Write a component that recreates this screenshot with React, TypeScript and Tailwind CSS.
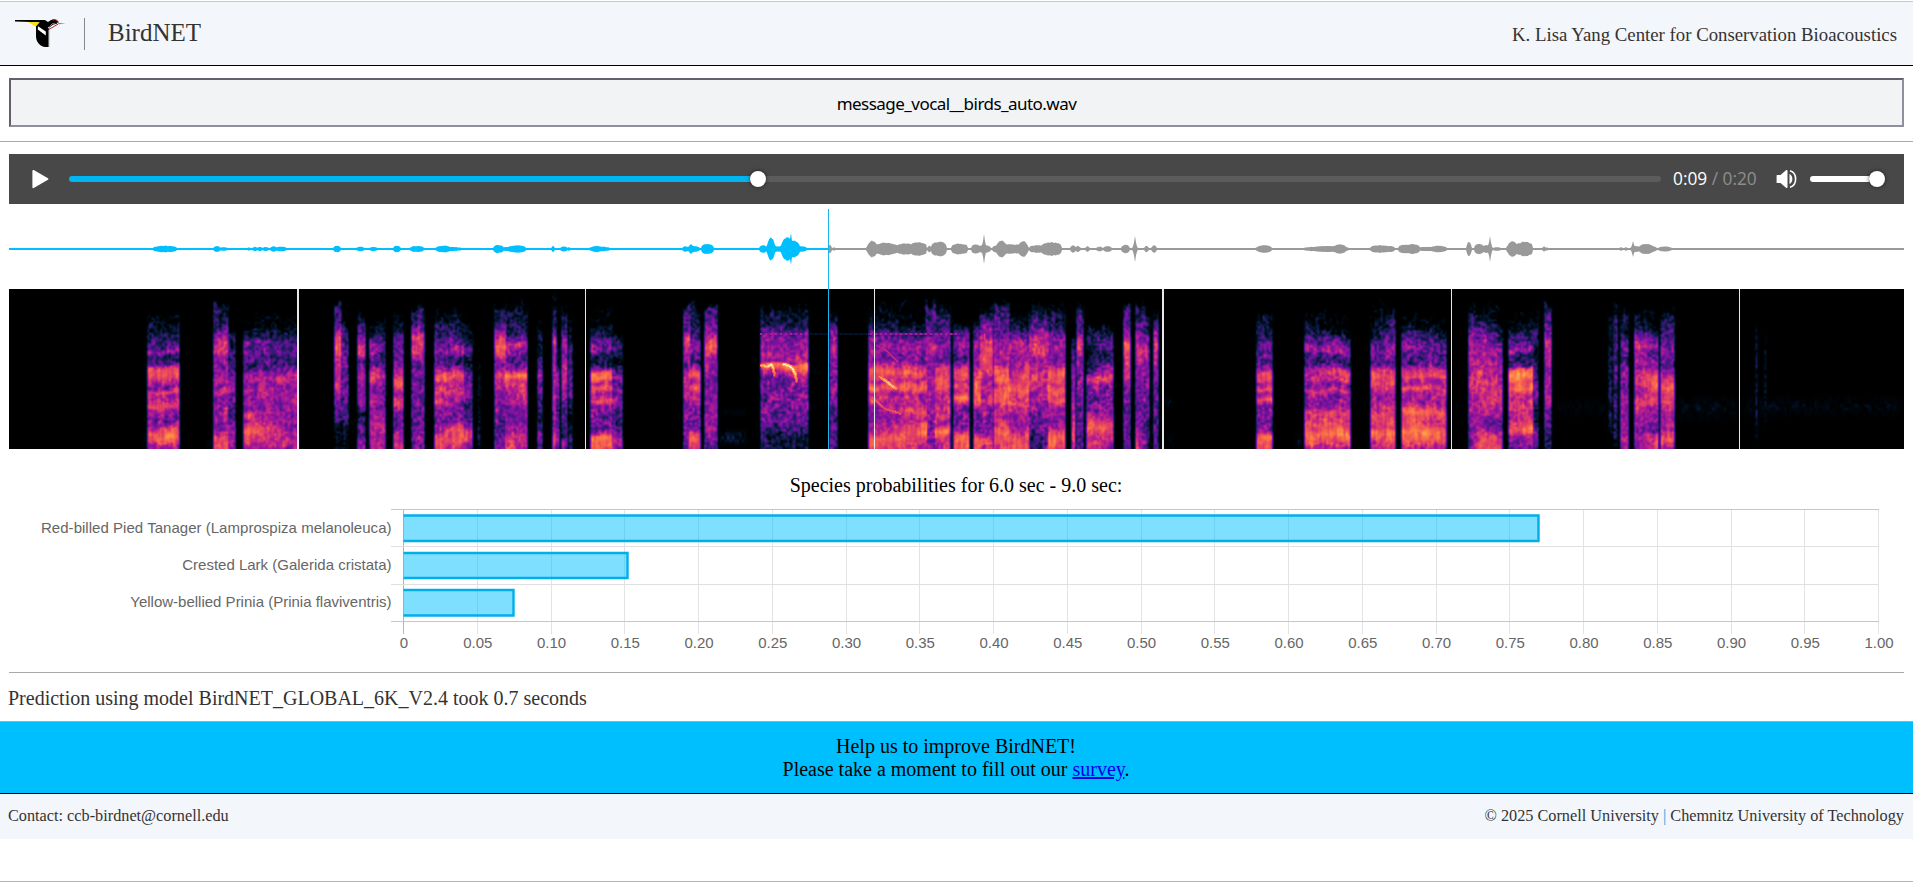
import { useLayoutEffect, useRef } from "react";

const WIDTH = 1895;
const SPEC_HEIGHT = 160;
const OFFSET = 9;

type Pair = [number, number];
type Segment = { x0: number; x1: number; left: Pair[]; right?: Pair[] };

const seg = (x0: number, x1: number, left: Pair[], right?: Pair[]): Segment => ({ x0, x1, left, right });

/* Energy profiles per syllable: [distance from the top, level] */
const segments: Segment[] = [
  seg(148, 178, [[24, 0], [26, 0.14], [29, 0.04], [39, 0.2], [50, 0.28], [58, 0.4], [62, 0.54], [66, 0.28], [73, 0.35], [77, 0.62], [81, 0.72], [88, 0.7], [94, 0.58], [98, 0.48], [102, 0.73], [106, 0.6], [117, 0.72], [121, 0.52], [132, 0.45], [139, 0.66], [144, 0.74], [150, 0.74], [155, 0.6], [160, 0.52]]),
  seg(214, 227, [[14, 0], [16, 0.2], [36, 0.3], [44, 0.48], [54, 0.66], [62, 0.62], [70, 0.48], [82, 0.5], [91, 0.62], [96, 0.46], [103, 0.68], [108, 0.48], [125, 0.5], [140, 0.5], [148, 0.7], [155, 0.72], [160, 0.68]]),
  seg(227, 234, [[42, 0], [46, 0.25], [80, 0.3], [90, 0.5], [102, 0.5], [125, 0.35], [140, 0.5], [150, 0.55], [160, 0.45]]),
  seg(244, 297, [[38, 0], [41, 0.2], [48, 0.2], [52, 0.48], [56, 0.42], [63, 0.55], [68, 0.34], [78, 0.3], [83, 0.54], [88, 0.58], [95, 0.5], [100, 0.64], [106, 0.52], [118, 0.5], [124, 0.68], [131, 0.6], [136, 0.74], [142, 0.83], [148, 0.72], [154, 0.62], [160, 0.55]], [[26, 0], [35, 0.08], [48, 0.26], [58, 0.4], [72, 0.3], [80, 0.5], [88, 0.58], [97, 0.5], [108, 0.6], [115, 0.6], [122, 0.48], [140, 0.48], [148, 0.58], [155, 0.68], [160, 0.45]]),
  seg(335, 340, [[14, 0], [18, 0.3], [35, 0.35], [48, 0.65], [60, 0.76], [74, 0.62], [83, 0.7], [100, 0.6], [115, 0.48], [140, 0.2], [160, 0.1]]),
  seg(340, 347, [[34, 0], [40, 0.28], [62, 0.45], [80, 0.42], [100, 0.4], [125, 0.4], [140, 0.1], [160, 0.05]]),
  seg(358, 364, [[24, 0], [32, 0.2], [46, 0.48], [56, 0.66], [64, 0.7], [73, 0.4], [86, 0.55], [100, 0.5], [115, 0.55], [125, 0.2], [145, 0.35], [160, 0.5]]),
  seg(370, 384, [[32, 0], [46, 0.35], [50, 0.56], [62, 0.5], [74, 0.38], [83, 0.66], [90, 0.7], [97, 0.5], [112, 0.7], [118, 0.5], [132, 0.56], [145, 0.56], [160, 0.48]], [[28, 0], [45, 0.18], [60, 0.4], [75, 0.35], [88, 0.58], [105, 0.4], [120, 0.46], [134, 0.62], [146, 0.64], [160, 0.58]]),
  seg(394, 402, [[26, 0], [40, 0.2], [50, 0.42], [64, 0.45], [72, 0.4], [80, 0.6], [94, 0.73], [103, 0.6], [115, 0.7], [124, 0.42], [136, 0.42], [148, 0.64], [160, 0.6]]),
  seg(412, 423, [[16, 0], [22, 0.25], [38, 0.4], [48, 0.66], [62, 0.66], [70, 0.45], [100, 0.47], [130, 0.42], [145, 0.48], [160, 0.46]]),
  seg(435, 463, [[20, 0], [28, 0.15], [40, 0.26], [50, 0.44], [56, 0.42], [62, 0.58], [67, 0.32], [76, 0.35], [81, 0.58], [87, 0.76], [94, 0.56], [102, 0.7], [107, 0.62], [112, 0.78], [118, 0.55], [130, 0.44], [143, 0.56], [150, 0.74], [160, 0.72]], [[22, 0], [32, 0.15], [44, 0.24], [52, 0.42], [62, 0.56], [67, 0.3], [76, 0.35], [82, 0.64], [87, 0.74], [94, 0.58], [102, 0.66], [108, 0.48], [118, 0.5], [130, 0.46], [139, 0.74], [148, 0.74], [160, 0.54]]),
  seg(464, 471, [[32, 0], [48, 0.2], [62, 0.42], [68, 0.1], [76, 0.22], [86, 0.52], [93, 0.4], [103, 0.56], [112, 0.36], [130, 0.4], [145, 0.66], [150, 0.66], [160, 0.46]]),
  seg(478, 479, [[60, 0], [80, 0.15], [100, 0.1], [125, 0.1], [150, 0.22], [160, 0.15]]),
  seg(495, 505, [[18, 0], [22, 0.2], [36, 0.35], [45, 0.6], [55, 0.72], [66, 0.7], [74, 0.48], [84, 0.56], [88, 0.7], [98, 0.54], [115, 0.5], [140, 0.4], [160, 0.45]]),
  seg(505, 526, [[14, 0], [22, 0.2], [45, 0.28], [55, 0.58], [62, 0.48], [75, 0.35], [82, 0.6], [86, 0.83], [89, 0.72], [94, 0.7], [103, 0.56], [112, 0.6], [118, 0.5], [135, 0.55], [147, 0.68], [160, 0.68]], [[12, 0], [22, 0.2], [45, 0.26], [55, 0.66], [62, 0.5], [75, 0.35], [82, 0.62], [86, 0.83], [92, 0.66], [102, 0.66], [110, 0.6], [125, 0.5], [145, 0.56], [152, 0.64], [160, 0.5]]),
  seg(538, 541, [[34, 0], [48, 0.2], [60, 0.15], [80, 0.45], [88, 0.58], [95, 0.35], [104, 0.55], [115, 0.3], [140, 0.3], [152, 0.56], [160, 0.4]]),
  seg(553, 555, [[2, 0], [6, 0.12], [40, 0.35], [55, 0.7], [66, 0.5], [80, 0.62], [100, 0.58], [110, 0.7], [125, 0.48], [140, 0.5], [150, 0.72], [160, 0.65]]),
  seg(556, 558, [[44, 0], [75, 0.2], [85, 0.5], [105, 0.5], [120, 0.3], [150, 0.56], [160, 0.4]]),
  seg(562, 566, [[14, 0], [20, 0.15], [40, 0.3], [52, 0.58], [66, 0.5], [80, 0.66], [92, 0.6], [105, 0.52], [125, 0.4], [145, 0.3], [155, 0.58], [160, 0.4]]),
  seg(569, 571, [[28, 0], [45, 0.15], [70, 0.38], [90, 0.45], [110, 0.35], [130, 0.1], [155, 0.35], [160, 0.2]]),
  seg(591, 611, [[20, 0], [36, 0.04], [38, 0.2], [48, 0.24], [52, 0.42], [62, 0.46], [66, 0.28], [74, 0.25], [80, 0.45], [84, 0.74], [90, 0.76], [95, 0.56], [101, 0.7], [105, 0.56], [112, 0.72], [117, 0.5], [128, 0.44], [142, 0.46], [148, 0.78], [156, 0.78], [160, 0.7]]),
  seg(611, 621, [[44, 0], [54, 0.3], [64, 0.25], [72, 0.14], [80, 0.35], [88, 0.54], [96, 0.4], [101, 0.56], [105, 0.4], [112, 0.56], [120, 0.35], [135, 0.3], [150, 0.6], [160, 0.45]]),

  seg(684, 689, [[14, 0], [20, 0.25], [40, 0.42], [52, 0.7], [64, 0.6], [76, 0.42], [86, 0.6], [100, 0.62], [115, 0.5], [150, 0.46], [160, 0.5]]),
  seg(689, 699, [[14, 0], [22, 0.16], [44, 0.26], [56, 0.48], [64, 0.5], [74, 0.3], [82, 0.7], [88, 0.74], [93, 0.6], [99, 0.74], [104, 0.58], [112, 0.68], [120, 0.46], [140, 0.46], [146, 0.68], [153, 0.78], [160, 0.68]]),
  seg(705, 716, [[16, 0], [20, 0.32], [34, 0.38], [48, 0.62], [57, 0.76], [68, 0.56], [80, 0.56], [92, 0.5], [120, 0.52], [150, 0.5], [160, 0.35]]),
  seg(761, 807, [[18, 0], [24, 0.16], [36, 0.26], [46, 0.48], [56, 0.5], [66, 0.56], [73, 0.5], [75, 0.8], [78, 0.82], [82, 0.6], [90, 0.46], [115, 0.44], [130, 0.44], [142, 0.34], [152, 0.26], [160, 0.2]], [[15, 0], [24, 0.16], [38, 0.28], [46, 0.48], [56, 0.56], [66, 0.6], [73, 0.56], [75, 0.8], [82, 0.76], [88, 0.52], [115, 0.48], [130, 0.42], [145, 0.26], [160, 0.16]]),
  seg(830, 836, [[20, 0], [32, 0.28], [50, 0.48], [60, 0.62], [72, 0.5], [90, 0.46], [110, 0.5], [130, 0.35], [140, 0.42], [160, 0.38]]),
  seg(869, 926, [[14, 0], [28, 0.14], [38, 0.3], [50, 0.48], [60, 0.56], [70, 0.48], [75, 0.62], [80, 0.74], [88, 0.72], [93, 0.62], [99, 0.8], [104, 0.6], [110, 0.72], [118, 0.54], [130, 0.5], [143, 0.6], [150, 0.78], [157, 0.76], [160, 0.7]], [[28, 0], [36, 0.14], [44, 0.3], [55, 0.5], [62, 0.5], [72, 0.42], [79, 0.64], [84, 0.74], [89, 0.58], [95, 0.75], [101, 0.78], [106, 0.56], [116, 0.6], [123, 0.76], [129, 0.56], [137, 0.76], [143, 0.8], [150, 0.68], [160, 0.6]]),
  seg(926, 935, [[8, 0], [18, 0.3], [42, 0.42], [56, 0.6], [72, 0.5], [90, 0.56], [120, 0.5], [160, 0.48]]),
  seg(935, 949, [[14, 0], [24, 0.22], [42, 0.36], [56, 0.52], [70, 0.45], [80, 0.7], [90, 0.72], [98, 0.76], [104, 0.6], [114, 0.66], [126, 0.68], [134, 0.6], [142, 0.84], [150, 0.64], [160, 0.58]]),
  seg(954, 968, [[34, 0], [42, 0.36], [55, 0.54], [68, 0.36], [75, 0.44], [80, 0.7], [90, 0.7], [95, 0.62], [99, 0.73], [103, 0.58], [109, 0.83], [113, 0.68], [118, 0.46], [140, 0.48], [146, 0.74], [156, 0.78], [160, 0.7]]),
  seg(974, 980, [[32, 0], [40, 0.36], [56, 0.58], [72, 0.48], [84, 0.64], [92, 0.74], [100, 0.72], [110, 0.74], [122, 0.48], [140, 0.44], [150, 0.72], [160, 0.68]]),
  seg(980, 992, [[18, 0], [26, 0.26], [42, 0.52], [54, 0.68], [66, 0.7], [80, 0.68], [92, 0.55], [110, 0.58], [126, 0.46], [142, 0.48], [150, 0.7], [160, 0.6]]),
  seg(994, 1008, [[10, 0], [20, 0.3], [34, 0.4], [52, 0.54], [64, 0.58], [74, 0.54], [80, 0.76], [88, 0.78], [96, 0.66], [104, 0.76], [110, 0.72], [120, 0.56], [134, 0.62], [144, 0.77], [156, 0.66], [160, 0.6]]),
  seg(1008, 1028, [[22, 0], [30, 0.22], [44, 0.4], [54, 0.6], [64, 0.54], [76, 0.48], [86, 0.64], [94, 0.7], [101, 0.77], [108, 0.6], [116, 0.7], [126, 0.5], [138, 0.5], [148, 0.72], [160, 0.72]], [[26, 0], [36, 0.18], [46, 0.38], [56, 0.52], [68, 0.5], [78, 0.72], [86, 0.78], [95, 0.68], [102, 0.8], [110, 0.66], [120, 0.64], [134, 0.52], [146, 0.72], [160, 0.72]]),
  seg(1029, 1048, [[14, 0], [24, 0.22], [36, 0.38], [48, 0.6], [58, 0.68], [68, 0.55], [78, 0.62], [88, 0.66], [98, 0.56], [120, 0.48], [136, 0.4], [146, 0.22], [160, 0.2]], [[16, 0], [24, 0.26], [36, 0.44], [50, 0.6], [60, 0.7], [70, 0.56], [80, 0.64], [100, 0.62], [120, 0.52], [140, 0.48], [160, 0.44]]),
  seg(1048, 1064, [[14, 0], [22, 0.2], [42, 0.36], [55, 0.54], [64, 0.5], [74, 0.5], [83, 0.76], [92, 0.7], [97, 0.66], [102, 0.75], [107, 0.68], [112, 0.78], [118, 0.58], [134, 0.5], [146, 0.76], [156, 0.78], [160, 0.7]]),
  seg(1072, 1074, [[46, 0], [55, 0.3], [70, 0.38], [82, 0.56], [96, 0.5], [110, 0.5], [124, 0.62], [140, 0.7], [160, 0.6]]),
  seg(1077, 1082, [[14, 0], [22, 0.3], [40, 0.38], [55, 0.66], [66, 0.58], [80, 0.5], [105, 0.46], [130, 0.38], [160, 0.36]]),
  seg(1087, 1112, [[35, 0], [42, 0.22], [54, 0.3], [70, 0.14], [82, 0.26], [90, 0.7], [96, 0.5], [110, 0.42], [122, 0.45], [129, 0.68], [140, 0.75], [146, 0.66], [155, 0.6], [160, 0.56]], [[36, 0], [46, 0.3], [56, 0.42], [68, 0.28], [78, 0.58], [88, 0.72], [96, 0.46], [110, 0.42], [122, 0.54], [136, 0.74], [146, 0.68], [160, 0.52]]),
  seg(1124, 1129, [[13, 0], [20, 0.36], [42, 0.46], [55, 0.7], [70, 0.66], [84, 0.62], [100, 0.48], [140, 0.46], [160, 0.45]]),
  seg(1136, 1148, [[14, 0], [22, 0.26], [40, 0.4], [50, 0.58], [64, 0.66], [76, 0.56], [90, 0.52], [120, 0.46], [142, 0.5], [150, 0.68], [160, 0.7]], [[18, 0], [32, 0.28], [50, 0.44], [64, 0.56], [80, 0.5], [110, 0.46], [140, 0.36], [160, 0.32]]),
  seg(1154, 1157, [[20, 0], [30, 0.28], [42, 0.5], [56, 0.68], [72, 0.56], [90, 0.46], [130, 0.42], [160, 0.38]]),
  seg(1257, 1271, [[22, 0], [28, 0.14], [48, 0.28], [58, 0.44], [74, 0.35], [81, 0.56], [85, 0.72], [91, 0.72], [95, 0.56], [101, 0.76], [105, 0.56], [111, 0.76], [116, 0.5], [134, 0.46], [142, 0.5], [148, 0.77], [157, 0.78], [160, 0.7]]),

  seg(1305, 1349, [[22, 0], [30, 0.14], [44, 0.28], [52, 0.44], [60, 0.62], [65, 0.36], [74, 0.36], [78, 0.52], [84, 0.62], [90, 0.6], [95, 0.48], [101, 0.6], [107, 0.44], [116, 0.5], [123, 0.66], [130, 0.62], [138, 0.7], [145, 0.8], [152, 0.74], [160, 0.54]], [[40, 0], [44, 0.14], [52, 0.4], [62, 0.54], [66, 0.36], [74, 0.28], [79, 0.64], [84, 0.74], [87, 0.6], [90, 0.7], [95, 0.48], [101, 0.66], [107, 0.46], [116, 0.54], [123, 0.76], [130, 0.66], [138, 0.72], [145, 0.83], [152, 0.7], [160, 0.54]]),
  seg(1371, 1394, [[26, 0], [46, 0.14], [54, 0.36], [64, 0.46], [74, 0.35], [80, 0.6], [85, 0.72], [91, 0.64], [96, 0.74], [104, 0.54], [116, 0.52], [124, 0.66], [132, 0.72], [138, 0.64], [143, 0.82], [150, 0.7], [160, 0.6]], [[14, 0], [30, 0.26], [46, 0.44], [58, 0.58], [72, 0.4], [80, 0.62], [86, 0.7], [92, 0.74], [100, 0.56], [110, 0.5], [117, 0.72], [126, 0.7], [136, 0.7], [142, 0.83], [152, 0.7], [160, 0.6]]),
  seg(1402, 1445, [[26, 0], [38, 0.22], [50, 0.36], [58, 0.54], [64, 0.42], [74, 0.36], [80, 0.64], [88, 0.7], [95, 0.56], [99, 0.73], [104, 0.56], [114, 0.56], [121, 0.8], [127, 0.7], [135, 0.72], [142, 0.84], [149, 0.75], [160, 0.56]], [[32, 0], [44, 0.14], [54, 0.38], [66, 0.4], [76, 0.36], [81, 0.6], [87, 0.73], [93, 0.56], [100, 0.72], [104, 0.54], [116, 0.54], [124, 0.74], [132, 0.62], [139, 0.68], [145, 0.78], [152, 0.72], [160, 0.56]]),
  seg(1469, 1480, [[14, 0], [24, 0.25], [44, 0.44], [54, 0.64], [64, 0.56], [80, 0.54], [100, 0.6], [130, 0.5], [160, 0.42]], [[14, 0], [30, 0.24], [46, 0.46], [62, 0.58], [80, 0.64], [90, 0.68], [106, 0.64], [130, 0.54], [147, 0.7], [160, 0.68]]),
  seg(1480, 1501, [[14, 0], [28, 0.26], [44, 0.46], [56, 0.58], [72, 0.56], [84, 0.66], [96, 0.68], [112, 0.62], [130, 0.5], [147, 0.72], [160, 0.68]], [[30, 0], [40, 0.26], [56, 0.46], [72, 0.5], [84, 0.58], [100, 0.62], [124, 0.58], [136, 0.4], [150, 0.7], [160, 0.68]]),
  seg(1509, 1532, [[26, 0], [40, 0.15], [52, 0.35], [62, 0.58], [67, 0.32], [77, 0.3], [81, 0.74], [86, 0.83], [93, 0.75], [100, 0.8], [104, 0.64], [112, 0.62], [118, 0.7], [128, 0.52], [142, 0.7], [148, 0.5], [160, 0.42]], [[24, 0], [38, 0.2], [52, 0.35], [60, 0.54], [67, 0.3], [76, 0.34], [80, 0.76], [86, 0.85], [93, 0.74], [101, 0.83], [106, 0.62], [116, 0.68], [128, 0.6], [140, 0.83], [148, 0.6], [160, 0.42]]),
  seg(1533, 1537, [[20, 0], [50, 0.25], [70, 0.18], [85, 0.36], [105, 0.4], [130, 0.2], [145, 0.4], [160, 0.26]]),
  seg(1545, 1550, [[12, 0], [18, 0.34], [40, 0.44], [52, 0.6], [64, 0.62], [78, 0.5], [100, 0.56], [125, 0.48], [140, 0.35], [160, 0.22]]),
  seg(1609, 1611, [[24, 0], [36, 0.12], [70, 0.22], [130, 0.2], [150, 0]]),
  seg(1614, 1616, [[14, 0], [22, 0.16], [50, 0.38], [70, 0.42], [120, 0.36], [140, 0.3], [160, 0.06]]),
  seg(1621, 1627, [[18, 0], [26, 0.16], [45, 0.25], [60, 0.42], [70, 0.3], [84, 0.56], [95, 0.44], [110, 0.52], [130, 0.5], [150, 0.62], [160, 0.5]]),
  seg(1635, 1657, [[20, 0], [30, 0.2], [42, 0.35], [48, 0.6], [56, 0.72], [64, 0.6], [76, 0.55], [86, 0.62], [100, 0.56], [112, 0.64], [130, 0.58], [142, 0.45], [148, 0.54], [160, 0.48]], [[32, 0], [38, 0.08], [46, 0.3], [55, 0.46], [66, 0.4], [78, 0.54], [86, 0.78], [96, 0.8], [102, 0.68], [112, 0.7], [124, 0.5], [140, 0.46], [148, 0.67], [160, 0.66]]),
  seg(1661, 1673, [[18, 0], [26, 0.22], [42, 0.36], [60, 0.44], [76, 0.36], [84, 0.6], [90, 0.68], [102, 0.72], [112, 0.68], [130, 0.52], [142, 0.6], [150, 0.72], [160, 0.56]]),
  seg(1756, 1756, [[36, 0], [60, 0.18], [130, 0.14], [160, 0.02]]),
  seg(1765, 1765, [[40, 0], [70, 0.15], [135, 0.08], [145, 0]]),
];

/* Bright contours, as [x, y, level] points */
const contours: [number, number, number][][] = [
  [[761, 76, 0.9], [767, 77, 0.95], [771, 75, 1], [773, 79, 0.9], [774, 86, 0.74]],
  [[783, 75, 1], [788, 76, 1], [792, 79, 1], [795, 85, 0.92], [796, 92, 0.76]],
  [[879, 87, 0.83], [886, 92, 0.93], [892, 97, 0.96], [896, 99, 0.82]],
  [[876, 56, 0.55], [886, 61, 0.62], [897, 72, 0.64]],
  [[872, 108, 0.74], [884, 119, 0.72], [900, 124, 0.74]],
  [[984, 45, 0.66], [986, 66, 0.7], [989, 80, 0.66]],
];

const colorStops: [number, number, number, number][] = [
  [0, 0, 0, 0],
  [0.08, 0, 6, 14],
  [0.18, 3, 22, 50],
  [0.28, 38, 26, 98],
  [0.38, 84, 20, 142],
  [0.48, 132, 18, 160],
  [0.58, 184, 30, 140],
  [0.68, 226, 62, 100],
  [0.78, 250, 110, 70],
  [0.88, 254, 164, 76],
  [1, 255, 246, 196],
];

function levelToColor(v: number): [number, number, number] {
  const t = Math.min(1, Math.max(0, v));
  for (let i = 1; i < colorStops.length; i++) {
    if (t <= colorStops[i][0]) {
      const a = colorStops[i - 1];
      const b = colorStops[i];
      const k = (t - a[0]) / (b[0] - a[0]);
      return [a[1] + (b[1] - a[1]) * k, a[2] + (b[2] - a[2]) * k, a[3] + (b[3] - a[3]) * k];
    }
  }
  return [255, 246, 196];
}

function sample(profile: Pair[], y: number): number {
  if (y <= profile[0][0]) return 0;
  for (let i = 1; i < profile.length; i++) {
    if (y <= profile[i][0]) {
      const [ya, va] = profile[i - 1];
      const [yb, vb] = profile[i];
      return va + ((vb - va) * (y - ya)) / (yb - ya);
    }
  }
  return profile[profile.length - 1][1];
}

function hash(x: number, y: number): number {
  let h = Math.imul(x, 374761393) + Math.imul(y, 668265263);
  h = Math.imul(h ^ (h >>> 13), 1274126177);
  return ((h ^ (h >>> 16)) >>> 0) / 4294967295;
}

function noise(x: number, y: number): number {
  const xi = Math.floor(x);
  const yi = Math.floor(y);
  const fx = x - xi;
  const fy = y - yi;
  const top = hash(xi, yi) * (1 - fx) + hash(xi + 1, yi) * fx;
  const bottom = hash(xi, yi + 1) * (1 - fx) + hash(xi + 1, yi + 1) * fx;
  return (top * (1 - fy) + bottom * fy) * 2 - 1;
}

function soften(source: Float32Array): Float32Array {
  const out = new Float32Array(source.length);
  for (let y = 0; y < SPEC_HEIGHT; y++) {
    for (let x = 0; x < WIDTH; x++) {
      let sum = 0;
      let total = 0;
      for (let dy = -1; dy <= 1; dy++) {
        for (let dx = -1; dx <= 1; dx++) {
          const xx = x + dx;
          const yy = y + dy;
          if (xx < 0 || yy < 0 || xx >= WIDTH || yy >= SPEC_HEIGHT) continue;
          const w = (dx === 0 ? 2.4 : 1) * (dy === 0 ? 2 : 1);
          sum += source[yy * WIDTH + xx] * w;
          total += w;
        }
      }
      out[y * WIDTH + x] = sum / total;
    }
  }
  return out;
}

function renderSpectrogram(ctx: CanvasRenderingContext2D) {
  const raw = new Float32Array(WIDTH * SPEC_HEIGHT);
  for (const s of segments) {
    for (let x = s.x0 - 2; x <= s.x1 + 2; x++) {
      const edge = x < s.x0 ? 1 - (s.x0 - x) / 2.6 : x > s.x1 ? 1 - (x - s.x1) / 2.6 : 1;
      const k = Math.min(1, Math.max(0, (x - s.x0) / Math.max(1, s.x1 - s.x0)));
      const rise = noise(x / 2.4, 900) * 6;
      const drift = noise(x / 7, 500) * 2;
      for (let y = 0; y < SPEC_HEIGHT; y++) {
        const yy = (y < 50 ? y - rise * (1 - y / 50) : y) + (y < 156 ? drift : 0);
        const a = sample(s.left, yy);
        const base = s.right ? a * (1 - k) + sample(s.right, yy) * k : a;
        if (base <= 0) continue;
        const rough = base < 0.5 ? 0.2 : base < 0.68 ? 0.13 : 0.06;
        const streak = noise(x / 1.6, 300 + y / 12) * 0.07;
        const grain = noise(x / 2.2, y / 2.2) * rough;
        const patch = noise(x / 8, 40 + y / 7) * 0.05;
        const v = (base - 0.015 + grain + streak + patch) * edge;
        const i = y * WIDTH + (x - OFFSET);
        if (v > raw[i]) raw[i] = v;
      }
    }
  }
  const field = soften(raw);
  for (const line of contours) {
    for (let n = 1; n < line.length; n++) {
      const [xa, ya, va] = line[n - 1];
      const [xb, yb, vb] = line[n];
      const steps = Math.ceil(Math.hypot(xb - xa, yb - ya) * 2);
      for (let t = 0; t <= steps; t++) {
        const k = t / steps;
        const cx = xa + (xb - xa) * k;
        const cy = ya + (yb - ya) * k;
        const v = va + (vb - va) * k;
        for (let dy = -1; dy <= 1; dy++) {
          for (let dx = -1; dx <= 1; dx++) {
            const i = Math.round(cy + dy) * WIDTH + Math.round(cx + dx) - OFFSET;
            field[i] = Math.max(field[i], v - (Math.abs(dy) + Math.abs(dx)) * 0.09);
          }
        }
      }
    }
  }
  for (let x = 760; x < 960; x++) {
    const on = (x >= 760 && x < 808) || x >= 868;
    const v = (x % 5 < 2 ? 0.56 : 0.42) * (on ? 1 : 0.3);
    for (let y = 44; y < 46; y++) {
      const i = y * WIDTH + x - OFFSET;
      field[i] = Math.max(field[i], v);
    }
  }
  const haze = (x0: number, x1: number, y0: number, y1: number, level: number) => {
    for (let x = x0; x < x1; x++) {
      for (let y = y0; y < y1; y++) {
        const dy = 1 - Math.abs((y - (y0 + y1) / 2) / ((y1 - y0) / 2));
        const dx = Math.min(1, (x - x0) / 6, (x1 - x) / 6);
        const i = y * WIDTH + x - OFFSET;
        field[i] = Math.max(field[i], level * dy * dx * (0.7 + noise(x / 2.5, y / 4)));
      }
    }
  };
  haze(716, 748, 138, 158, 0.2);
  haze(716, 748, 118, 128, 0.08);
  haze(808, 822, 74, 86, 0.1);
  haze(1162, 1174, 106, 119, 0.19);
  haze(1163, 1178, 144, 158, 0.13);
  haze(140, 148, 138, 158, 0.15);
  haze(204, 214, 148, 160, 0.15);
  haze(1292, 1304, 142, 160, 0.16);
  haze(1446, 1468, 108, 132, 0.06);
  haze(1553, 1610, 106, 130, 0.07);
  haze(1674, 1740, 104, 134, 0.11);
  haze(1740, 1903, 104, 130, 0.1);

  const image = ctx.createImageData(WIDTH, SPEC_HEIGHT);
  for (let i = 0; i < field.length; i++) {
    const [r, g, b] = levelToColor(field[i]);
    image.data[i * 4] = r;
    image.data[i * 4 + 1] = g;
    image.data[i * 4 + 2] = b;
    image.data[i * 4 + 3] = 255;
  }
  ctx.putImageData(image, 0, 0);
  ctx.fillStyle = "#e8e8e8";
  for (const [x, w] of [[297, 2], [585, 1], [874, 1], [1162, 2], [1451, 1], [1739, 1]]) {
    ctx.fillRect(x - OFFSET, 0, w, SPEC_HEIGHT);
  }
}

function Spectrogram() {
  const ref = useRef<HTMLCanvasElement>(null);
  useLayoutEffect(() => {
    const ctx = ref.current?.getContext("2d");
    if (ctx) renderSpectrogram(ctx);
  }, []);
  return <canvas ref={ref} width={WIDTH} height={SPEC_HEIGHT} className="block h-[160px] w-[1895px] bg-black" />;
}

/* Loud passages of the recording: [start, end, half height] */
const bursts: [number, number, number][] = [
  [154, 176, 3.4], [214, 220, 3], [221, 227, 2], [248, 250, 2], [253, 257, 2.2], [258, 262, 2.2], [263, 268, 2.2], [271, 276, 2.8], [276, 286, 2.4],
  [334, 340, 3.4], [357, 364, 2.4], [370, 377, 2.2], [394, 400, 3.4], [411, 423, 3.2], [436, 461, 2.2], [437, 450, 3.6],
  [494, 503, 4.2], [503, 512, 2.2], [509, 525, 3.8], [552, 554, 3.5], [561, 567, 2.8], [568, 570, 2], [590, 609, 2.5], [592, 602, 3.3],
  [683, 688, 3], [689, 699, 3], [689, 693, 5], [702, 713, 5.4], [760, 766, 4], [767, 775, 12], [773, 783, 3], [781, 793, 12.5],
  [788, 800, 9], [796, 806, 3], [829, 831, 5], [833, 835, 2],
  [867, 878, 8.6], [874, 898, 6], [878, 892, 6.8], [896, 916, 5.6], [900, 908, 6], [911, 926, 7.4], [928, 931, 3.5], [932, 946, 7.6],
  [952, 967, 5.6], [972, 979, 5.2], [978, 990, 4.2], [993, 998, 3.5], [996, 1007, 9], [1004, 1017, 5], [1013, 1028, 5], [1018, 1028, 8.5],
  [1030, 1044, 4], [1042, 1061, 7], [1046, 1052, 6.5], [1071, 1075, 4], [1076, 1080, 3.2], [1086, 1089, 3], [1097, 1102, 2.5],
  [1104, 1111, 3], [1122, 1129, 4.4], [1145, 1148, 3.6], [1152, 1156, 4], [1256, 1258, 2], [1258, 1271, 4],
  [1305, 1348, 2.6], [1312, 1346, 3.2], [1335, 1345, 5], [1371, 1389, 4], [1384, 1394, 3.2], [1399, 1410, 4.5], [1406, 1419, 5.2],
  [1418, 1436, 2.2], [1431, 1446, 3.4], [1467, 1471, 7.5], [1475, 1483, 5.4], [1483, 1489, 4.2], [1494, 1500, 2],
  [1507, 1518, 8.4], [1514, 1526, 6], [1518, 1532, 7.6], [1543, 1545, 3], [1546, 1548, 2], [1620, 1622, 2], [1625, 1627, 2],
  [1633, 1640, 3], [1640, 1652, 5.4], [1648, 1656, 3], [1659, 1671, 2.6],
];

const spikes: [number, number][] = [[791, 16], [984, 15], [1023, 6], [1135, 13], [1490, 13], [1633, 8]];

function halfHeight(x: number): number {
  let h = 1;
  for (const [x0, x1, peak] of bursts) {
    if (x < x0 || x > x1) continue;
    const t = (x - x0) / (x1 - x0);
    const power = peak > 8 ? 0.8 : 0.32;
    h = Math.max(h, peak * Math.pow(Math.sin(Math.PI * (0.08 + t * 0.84)), power) * (1 - hash(x, 7) * 0.14));
  }
  for (const [cx, peak] of spikes) {
    const d = Math.abs(x - cx);
    if (d < 3) h = Math.max(h, peak * [1, 0.5, 0.2][d]);
  }
  return h;
}

function wavePath(from: number, to: number): string {
  const top: string[] = [];
  const bottom: string[] = [];
  for (let x = from; x <= to; x++) {
    const h = halfHeight(x);
    top.push(`${x - OFFSET} ${(40 - h).toFixed(2)}`);
    bottom.unshift(`${x - OFFSET} ${(40 + h).toFixed(2)}`);
  }
  return `M${top.join("L")}L${bottom.join("L")}Z`;
}

function Waveform() {
  return (
    <svg width={WIDTH} height={80} className="block" aria-hidden="true">
      <path d={wavePath(9, 828)} fill="#00bfff" />
      <path d={wavePath(828, 1904)} fill="#999999" />
    </svg>
  );
}

function Logo() {
  return (
    <svg width="52" height="30" viewBox="0 0 52 30" aria-hidden="true">
      <path d="M0 1H30L33 3L36 1L39 .2L43 2L44 4L34 8.500V28H30.500C25 27.500 21 23 21 17V6.500L24.500 3.200L0 2.600Z" fill="#000" />
      <path d="M13 3L24.500 3.200L20.800 7.800Z" fill="#f4e400" />
      <path d="M23 7.200L30.800 12.500V16.500L22.800 10.400Z" fill="#fff" />
      <path d="M33 8.500L37.500 4.600L44 3.500L50 4.800L43 5.200L34.500 10.500Z" fill="#fff" />
      <path d="M34 8.300L38 5.200L42 4.300" stroke="#111" strokeWidth="1" fill="none" />
      <path d="M34 10.300L38 8L43.500 4.800M37.500 .9L41 .8L43 2.600" stroke="#b3202f" strokeWidth="1" fill="none" />
      <path d="M33 11L34.200 10V28H33Z" fill="#666" />
      <path d="M43.500 4L50.500 4.600L44 5.200Z" fill="#777" />
    </svg>
  );
}

function Header() {
  return (
    <header className="flex h-[65px] items-start justify-between border-t border-b border-t-[#c8c8c8] border-b-black bg-[#f3f6fb] pr-4 pl-[15px] text-[#333]">
      <div className="flex items-start">
        <div className="pt-[17px]">
          <Logo />
        </div>
        <div className="mt-4 ml-[17px] h-8 w-px bg-[#888]" />
        <h1 className="ml-[23px] pt-[17px] text-[25px] leading-[28px]">BirdNET</h1>
      </div>
      <p className="pt-[21px] text-[18.8px] leading-[24px]">K. Lisa Yang Center for Conservation Bioacoustics</p>
    </header>
  );
}

function Player() {
  return (
    <div className="flex h-[50px] items-center bg-[#484848] pr-[19px] pl-[23px] font-['Open_Sans','Noto_Sans',sans-serif]">
      <svg width="18" height="20" viewBox="0 0 18 20" aria-hidden="true">
        <path d="M1.300 1.800L15.500 10L1.300 18.200Z" fill="#fff" stroke="#fff" strokeWidth="1.800" strokeLinejoin="round" />
      </svg>
      <div className="ml-[19px] flex h-4 w-[1592px] items-center">
        <div className="h-[6px] w-[681px] rounded-l-full bg-[#00b6f0]" />
        <div className="z-10 h-4 w-4 shrink-0 rounded-full bg-white shadow-[0_0_4px_rgba(0,0,0,0.6)]" />
        <div className="h-[6px] flex-1 rounded-r-full bg-[#5c5c5c]" />
      </div>
      <div className="ml-3 w-[84px] text-[17.3px] whitespace-pre text-[#8e8e8e]">
        <span className="text-white">0:09</span> / 0:20
      </div>
      <svg className="ml-[19px]" width="21" height="20" viewBox="0 0 21 20" aria-hidden="true">
        <path d="M.6 6.500Q.6 6 1.200 6H4.500L10 1.200Q11.500 .4 11.500 2V18Q11.500 19.600 10 18.800L4.500 14H1.200Q.6 14 .6 13.500Z" fill="#fff" />
        <path d="M13.500 5C17.300 6.500 17.300 13.500 13.500 15Z" fill="#fff" />
        <path d="M14 1.800C21.500 4 21.500 16 14 18.200" fill="none" stroke="#fff" strokeWidth="1.600" />
      </svg>
      <div className="ml-[13px] flex h-4 flex-1 items-center">
        <div className="h-[6px] flex-1 rounded-l-full bg-white" />
        <div className="h-4 w-4 shrink-0 rounded-full bg-white shadow-[0_0_4px_rgba(0,0,0,0.6)]" />
      </div>
    </div>
  );
}

const species = [
  { name: "Red-billed Pied Tanager (Lamprospiza melanoleuca)", end: 1538.5, top: 515.5, bottom: 541, baseline: 533 },
  { name: "Crested Lark (Galerida cristata)", end: 627.5, top: 553, bottom: 578, baseline: 570 },
  { name: "Yellow-bellied Prinia (Prinia flaviventris)", end: 513.5, top: 590, bottom: 615.5, baseline: 607 },
];

function ProbabilityChart() {
  const ticks = Array.from({ length: 21 }, (_, i) => i);
  return (
    <svg width={WIDTH} height={150} viewBox="9 504 1895 150" className="block font-['Liberation_Sans',Arial,sans-serif]">
      {ticks.map((i) => (
        <g key={i}>
          <rect x={Math.round(403 + i * 73.75)} y={509} width={1} height={125} fill={i === 0 ? "#b5b5b5" : "#e3e3e3"} />
          <text x={404 + i * 73.75} y={648} textAnchor="middle" fontSize="15" fill="#666">
            {i === 0 ? "0" : (i * 0.05).toFixed(2)}
          </text>
        </g>
      ))}
      {[509, 546, 584, 621].map((y, i) => (
        <rect key={y} x={391} y={y} width={1488} height={1} fill={i === 0 || i === 3 ? "#c6c6c6" : "#e0e0e0"} />
      ))}
      {species.map((s) => (
        <g key={s.name}>
          <rect x={403.5} y={s.top} width={s.end - 403.5} height={s.bottom - s.top} fill="#00bfff" fillOpacity=".5" />
          <path d={`M403.500 ${s.top}H${s.end}V${s.bottom}H403.500`} fill="none" stroke="#00aeea" strokeWidth="2.400" />
          <text x={391.5} y={s.baseline} textAnchor="end" fontSize="15" textLength={s === species[0] ? 350.5 : undefined} fill="#666">
            {s.name}
          </text>
        </g>
      ))}
    </svg>
  );
}

export default function App() {
  return (
    <div className="flex h-[882px] w-full flex-col overflow-hidden border-b border-[#b4b4b8] bg-white pt-px font-['Liberation_Serif','Times_New_Roman',serif] text-black">
      <Header />
      <div className="mx-[9px] mt-3 flex h-[49px] items-center justify-center border-2 border-t-[#62606c] border-r-[#8f8f9d] border-b-[#8f8f9d] border-l-[#62606c] bg-[#f1f3f5] pt-[2px] font-['Noto_Sans',sans-serif] text-[17px] tracking-[-0.54px]">
        message_vocal__birds_auto.wav
      </div>
      <hr className="mt-[14px] border-t border-[#aaa]" />
      <main className="mx-[9px] mt-3 flex flex-col">
        <Player />
        <div className="relative mt-[5px]">
          <Waveform />
          <Spectrogram />
          <div className="absolute top-0 left-[819px] h-full w-px bg-[#1cb5ea]" />
        </div>
        <h2 className="mt-[25px] pr-px text-center text-[20px] leading-[23px]">Species probabilities for 6.0 sec - 9.0 sec:</h2>
        <div className="mt-[7px]">
          <ProbabilityChart />
        </div>
        <hr className="mt-[18px] border-t border-[#aaa]" />
        <p className="mt-[14px] -ml-px text-[20px] leading-[23px] text-[#333]">Prediction using model BirdNET_GLOBAL_6K_V2.4 took 0.7 seconds</p>
      </main>
      <section className="mt-[11px] h-[72px] border-t border-[#aaa] bg-[#00bfff] pt-[13px] pr-px text-center text-[20px] leading-[23px]">
        <p>Help us to improve BirdNET!</p>
        <p>
          Please take a moment to fill out our{" "}
          <a href="#survey" className="text-[#0000ee] underline">
            survey
          </a>
          .
        </p>
      </section>
      <footer className="flex h-[46px] items-start justify-between border-t border-black bg-[#f3f6fb] pt-[13px] pr-[9px] pl-2 text-[16.25px] leading-[18px] text-[#333]">
        <p>Contact: ccb-birdnet@cornell.edu</p>
        <p>
          © 2025 Cornell University <span className="text-[#0ea5dc]">|</span> Chemnitz University of Technology
        </p>
      </footer>
    </div>
  );
}
